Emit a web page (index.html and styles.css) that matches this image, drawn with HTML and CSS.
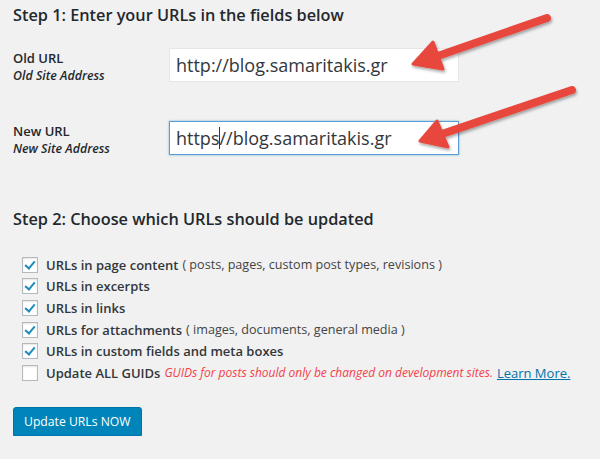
FILE: index.html
```html
<!DOCTYPE html>
<html lang="en">
<head>
  <meta charset="UTF-8">
  <title>Velvet Blues Update URLs</title>
  <link rel="stylesheet" href="styles.css">
</head>
<body>
  <div class="wrap">
    <h3 class="step">Step 1: Enter your URLs in the fields below</h3>

    <div class="field-row">
      <div class="field-label">
        <strong>Old URL</strong>
        <em>Old Site Address</em>
      </div>
      <div class="url-box">http://blog.samaritakis.gr</div>
    </div>

    <div class="field-row">
      <div class="field-label">
        <strong>New URL</strong>
        <em>New Site Address</em>
      </div>
      <div class="url-box focused">https<span class="caret"></span>//blog.samaritakis.gr</div>
    </div>

    <h3 class="step step-two">Step 2: Choose which URLs should be updated</h3>

    <ul class="options">
      <li><span class="check on"></span><strong>URLs in page content</strong> <span class="note">( posts, pages, custom post types, revisions )</span></li>
      <li><span class="check on"></span><strong>URLs in excerpts</strong></li>
      <li><span class="check on"></span><strong>URLs in links</strong></li>
      <li><span class="check on"></span><strong>URLs for attachments</strong> <span class="note">( images, documents, general media )</span></li>
      <li><span class="check on"></span><strong>URLs in custom fields and meta boxes</strong></li>
      <li><span class="check"></span><strong>Update ALL GUIDs</strong> <em class="warn">GUIDs for posts should only be changed on development sites.</em> <a href="#">Learn More.</a></li>
    </ul>

    <button class="update-btn">Update URLs NOW</button>
  </div>

  <!-- annotation arrows drawn over the screenshot -->
  <svg class="arrows" width="600" height="459" viewBox="0 0 600 459">
    <defs>
      <filter id="shade" x="-20%" y="-20%" width="140%" height="140%">
        <feDropShadow dx="1" dy="2" stdDeviation="1.5" flood-color="#000" flood-opacity="0.35"/>
      </filter>
    </defs>
    <g filter="url(#shade)" fill="#e8473d" stroke="#e8473d" stroke-linecap="round" stroke-linejoin="round">
      <line x1="547" y1="18" x2="432" y2="58" stroke-width="8"/>
      <polygon points="413,64 433,42 443,69" stroke-width="3"/>
      <line x1="572" y1="90" x2="436" y2="136" stroke-width="8"/>
      <polygon points="420,141 437,121 448,147" stroke-width="3"/>
    </g>
  </svg>
</body>
</html>
```

FILE: styles.css
```css
body {
  margin: 0;
  background: #f1f1f1;
  color: #23282d;
  font-family: "Open Sans", "Noto Sans", sans-serif;
  font-size: 13px;
}

.wrap {
  padding: 4px 13px 0;
}

.step {
  margin: 0;
  font-size: 16.3px;
  font-weight: 600;
  color: #23282d;
}

.step-two {
  margin-top: 53px;
}

.field-row {
  display: flex;
  align-items: flex-start;
  height: 34px;
  margin-top: 22px;
}

.field-row + .field-row {
  margin-top: 39px;
}

.field-label {
  width: 156px;
  padding-top: 2px;
  line-height: 17px;
}

.field-label strong {
  display: block;
  font-weight: 600;
}

.field-label em {
  display: block;
  font-weight: 600;
  font-size: 12.4px;
}

.url-box {
  width: 276px;
  height: 32px;
  padding: 0 6px;
  background: #fff;
  border: 1px solid #e6e6e6;
  font-size: 18px;
  line-height: 33px;
  color: #32373c;
  white-space: nowrap;
}

.url-box.focused {
  border-color: #5b9dd9;
  box-shadow: 0 0 2px rgba(30, 140, 190, 0.6);
}

.caret {
  display: inline-block;
  width: 1px;
  height: 22px;
  margin-right: -1px;
  vertical-align: -4px;
  background: #32373c;
}

.options {
  list-style: none;
  margin: 24px 0 0;
  padding: 0 0 0 9px;
}

.options li {
  display: flex;
  align-items: center;
  height: 21.6px;
  white-space: nowrap;
}

.options strong {
  font-weight: 600;
  color: #32373c;
}

.note {
  margin-left: 4px;
  font-size: 12.6px;
  color: #444;
}

.check {
  position: relative;
  width: 14px;
  height: 14px;
  margin-right: 8px;
  background: #fff;
  border: 1px solid #b4b9be;
  box-shadow: inset 0 1px 2px rgba(0, 0, 0, 0.1);
  flex-shrink: 0;
}

.check.on::after {
  content: "";
  position: absolute;
  left: 4px;
  top: 1px;
  width: 4px;
  height: 8px;
  border: solid #1e8cbe;
  border-width: 0 2px 2px 0;
  transform: rotate(40deg);
}

.warn {
  margin-left: 4px;
  color: #f4404a;
  font-size: 12px;
}

.options a {
  margin-left: 4px;
  color: #0073aa;
}

.update-btn {
  margin-top: 23px;
  height: 29px;
  padding: 0 10px;
  background: #0085ba;
  border: 1px solid #0073aa;
  border-radius: 3px;
  box-shadow: 0 1px 0 #006799;
  color: #fff;
  font-family: inherit;
  font-size: 12.2px;
}

.arrows {
  position: absolute;
  left: 0;
  top: 0;
  pointer-events: none;
}
```
